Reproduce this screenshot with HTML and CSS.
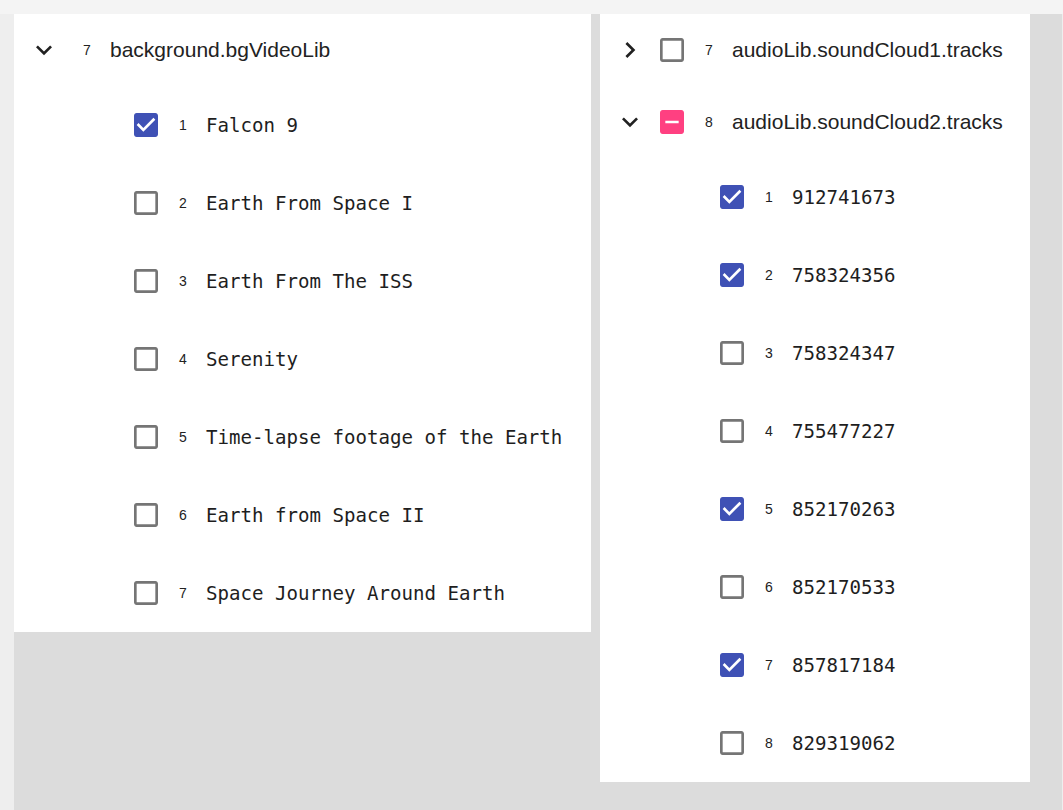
FILE: index.html
```html
<!DOCTYPE html>
<html>
<head>
<meta charset="utf-8">
<link rel="stylesheet" href="styles.css">
</head>
<body>
<div class="topbar"></div>
<div class="main">
  <div class="card card-left">
    <div class="row head">
      <svg class="chev" viewBox="0 0 24 24"><path d="M16.59 8.59L12 13.17 7.41 8.59 6 10l6 6 6-6z"/></svg>
      <span class="num num-chev">7</span>
      <span class="title">background.bgVideoLib</span>
    </div>
    <div class="row child">
      <svg class="cb on" viewBox="3 3 18 18"><path d="M19 3H5c-1.11 0-2 .9-2 2v14c0 1.1.89 2 2 2h14c1.11 0 2-.9 2-2V5c0-1.1-.89-2-2-2zm-9 14l-5-5 1.41-1.41L10 14.17l7.59-7.59L19 8l-9 9z"/></svg>
      <span class="num">1</span><span class="item">Falcon 9</span>
    </div>
    <div class="row child">
      <svg class="cb off" viewBox="3 3 18 18"><path d="M19 5v14H5V5h14m0-2H5c-1.1 0-2 .9-2 2v14c0 1.1.9 2 2 2h14c1.1 0 2-.9 2-2V5c0-1.1-.9-2-2-2z"/></svg>
      <span class="num">2</span><span class="item">Earth From Space I</span>
    </div>
    <div class="row child">
      <svg class="cb off" viewBox="3 3 18 18"><path d="M19 5v14H5V5h14m0-2H5c-1.1 0-2 .9-2 2v14c0 1.1.9 2 2 2h14c1.1 0 2-.9 2-2V5c0-1.1-.9-2-2-2z"/></svg>
      <span class="num">3</span><span class="item">Earth From The ISS</span>
    </div>
    <div class="row child">
      <svg class="cb off" viewBox="3 3 18 18"><path d="M19 5v14H5V5h14m0-2H5c-1.1 0-2 .9-2 2v14c0 1.1.9 2 2 2h14c1.1 0 2-.9 2-2V5c0-1.1-.9-2-2-2z"/></svg>
      <span class="num">4</span><span class="item">Serenity</span>
    </div>
    <div class="row child">
      <svg class="cb off" viewBox="3 3 18 18"><path d="M19 5v14H5V5h14m0-2H5c-1.1 0-2 .9-2 2v14c0 1.1.9 2 2 2h14c1.1 0 2-.9 2-2V5c0-1.1-.9-2-2-2z"/></svg>
      <span class="num">5</span><span class="item">Time-lapse footage of the Earth</span>
    </div>
    <div class="row child">
      <svg class="cb off" viewBox="3 3 18 18"><path d="M19 5v14H5V5h14m0-2H5c-1.1 0-2 .9-2 2v14c0 1.1.9 2 2 2h14c1.1 0 2-.9 2-2V5c0-1.1-.9-2-2-2z"/></svg>
      <span class="num">6</span><span class="item">Earth from Space II</span>
    </div>
    <div class="row child">
      <svg class="cb off" viewBox="3 3 18 18"><path d="M19 5v14H5V5h14m0-2H5c-1.1 0-2 .9-2 2v14c0 1.1.9 2 2 2h14c1.1 0 2-.9 2-2V5c0-1.1-.9-2-2-2z"/></svg>
      <span class="num">7</span><span class="item">Space Journey Around Earth</span>
    </div>
  </div>

  <div class="card card-right">
    <div class="row head">
      <svg class="chev" viewBox="0 0 24 24"><path d="M10 6L8.59 7.41 13.170 12l-4.58 4.59L10 18l6-6z"/></svg>
      <svg class="cb off head-cb" viewBox="3 3 18 18"><path d="M19 5v14H5V5h14m0-2H5c-1.1 0-2 .9-2 2v14c0 1.1.9 2 2 2h14c1.1 0 2-.9 2-2V5c0-1.1-.9-2-2-2z"/></svg>
      <span class="num">7</span>
      <span class="title">audioLib.soundCloud1.tracks</span>
    </div>
    <div class="row head">
      <svg class="chev" viewBox="0 0 24 24"><path d="M16.59 8.59L12 13.17 7.41 8.59 6 10l6 6 6-6z"/></svg>
      <svg class="cb ind head-cb" viewBox="3 3 18 18"><path d="M19 3H5c-1.1 0-2 .9-2 2v14c0 1.1.9 2 2 2h14c1.1 0 2-.9 2-2V5c0-1.1-.9-2-2-2zm-2 10H7v-2h10v2z"/></svg>
      <span class="num">8</span>
      <span class="title">audioLib.soundCloud2.tracks</span>
    </div>
    <div class="row child">
      <svg class="cb on" viewBox="3 3 18 18"><path d="M19 3H5c-1.11 0-2 .9-2 2v14c0 1.1.89 2 2 2h14c1.11 0 2-.9 2-2V5c0-1.1-.89-2-2-2zm-9 14l-5-5 1.41-1.41L10 14.17l7.59-7.59L19 8l-9 9z"/></svg>
      <span class="num">1</span><span class="item">912741673</span>
    </div>
    <div class="row child">
      <svg class="cb on" viewBox="3 3 18 18"><path d="M19 3H5c-1.11 0-2 .9-2 2v14c0 1.1.89 2 2 2h14c1.11 0 2-.9 2-2V5c0-1.1-.89-2-2-2zm-9 14l-5-5 1.41-1.41L10 14.17l7.59-7.59L19 8l-9 9z"/></svg>
      <span class="num">2</span><span class="item">758324356</span>
    </div>
    <div class="row child">
      <svg class="cb off" viewBox="3 3 18 18"><path d="M19 5v14H5V5h14m0-2H5c-1.1 0-2 .9-2 2v14c0 1.1.9 2 2 2h14c1.1 0 2-.9 2-2V5c0-1.1-.9-2-2-2z"/></svg>
      <span class="num">3</span><span class="item">758324347</span>
    </div>
    <div class="row child">
      <svg class="cb off" viewBox="3 3 18 18"><path d="M19 5v14H5V5h14m0-2H5c-1.1 0-2 .9-2 2v14c0 1.1.9 2 2 2h14c1.1 0 2-.9 2-2V5c0-1.1-.9-2-2-2z"/></svg>
      <span class="num">4</span><span class="item">755477227</span>
    </div>
    <div class="row child">
      <svg class="cb on" viewBox="3 3 18 18"><path d="M19 3H5c-1.11 0-2 .9-2 2v14c0 1.1.89 2 2 2h14c1.11 0 2-.9 2-2V5c0-1.1-.89-2-2-2zm-9 14l-5-5 1.41-1.41L10 14.17l7.59-7.59L19 8l-9 9z"/></svg>
      <span class="num">5</span><span class="item">852170263</span>
    </div>
    <div class="row child">
      <svg class="cb off" viewBox="3 3 18 18"><path d="M19 5v14H5V5h14m0-2H5c-1.1 0-2 .9-2 2v14c0 1.1.9 2 2 2h14c1.1 0 2-.9 2-2V5c0-1.1-.9-2-2-2z"/></svg>
      <span class="num">6</span><span class="item">852170533</span>
    </div>
    <div class="row child">
      <svg class="cb on" viewBox="3 3 18 18"><path d="M19 3H5c-1.11 0-2 .9-2 2v14c0 1.1.89 2 2 2h14c1.11 0 2-.9 2-2V5c0-1.1-.89-2-2-2zm-9 14l-5-5 1.41-1.41L10 14.17l7.59-7.59L19 8l-9 9z"/></svg>
      <span class="num">7</span><span class="item">857817184</span>
    </div>
    <div class="row child">
      <svg class="cb off" viewBox="3 3 18 18"><path d="M19 5v14H5V5h14m0-2H5c-1.1 0-2 .9-2 2v14c0 1.1.9 2 2 2h14c1.1 0 2-.9 2-2V5c0-1.1-.9-2-2-2z"/></svg>
      <span class="num">8</span><span class="item">829319062</span>
    </div>
  </div>
</div>
</body>
</html>
```

FILE: styles.css
```css
html, body {
  margin: 0;
  padding: 0;
}
body {
  background: #eeeeee;
  font-family: "Liberation Sans", Arial, sans-serif;
  color: #222222;
  height: 810px;
  overflow: hidden;
}
.topbar {
  height: 14px;
  background: #f4f4f4;
}
.main {
  margin-left: 14px;
  width: 1048px;
  height: 796px;
  background: #dcdcdc;
  display: flex;
  align-items: flex-start;
  gap: 9px;
}
.card {
  background: #ffffff;
}
.card-left {
  width: 577px;
}
.card-right {
  width: 430px;
}
.row {
  display: flex;
  align-items: center;
}
.head {
  height: 72px;
  padding-left: 14px;
}
.child {
  height: 78px;
  padding-left: 120px;
}
.chev {
  width: 32px;
  height: 32px;
  flex: none;
  fill: #212121;
}
.cb {
  width: 24px;
  height: 24px;
  flex: none;
}
.head-cb {
  margin-left: 14px;
}
.cb.on path { fill: #3f51b5; }
.cb.off path { fill: #757575; }
.cb.ind path { fill: #ff4081; }
.num {
  font-size: 14px;
  width: 27px;
  margin-left: 21px;
  flex: none;
  color: #222222;
}
.num-chev {
  margin-left: 23px;
}
.title {
  font-size: 21px;
  color: #222222;
}
.item {
  font-family: "DejaVu Sans Mono", "Liberation Mono", monospace;
  font-size: 19.1px;
  color: #1e1e1e;
}
```
